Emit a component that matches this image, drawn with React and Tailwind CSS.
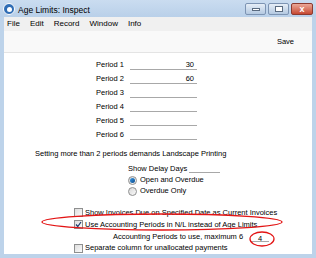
import React from 'react';

const font = { fontFamily: '"Liberation Sans", Arial, sans-serif' };

const periods = [
  { label: 'Period 1', value: '30' },
  { label: 'Period 2', value: '60' },
  { label: 'Period 3', value: '' },
  { label: 'Period 4', value: '' },
  { label: 'Period 5', value: '' },
  { label: 'Period 6', value: '' },
];

const Checkbox = ({ checked }) => (
  <span className="w-[9px] h-[9px] border border-[#8e8f8f] bg-gradient-to-br from-[#dedede] to-[#fafafa] flex items-center justify-center shrink-0">
    {checked && (
      <svg width="7" height="7" viewBox="0 0 7 7">
        <path d="M1 3.5 L2.8 5.5 L6 1" stroke="#1c3c6e" strokeWidth="1.2" fill="none" />
      </svg>
    )}
  </span>
);

const Radio = ({ checked }) => (
  <span className="w-[9px] h-[9px] rounded-full border border-[#8e8f8f] bg-gradient-to-br from-[#d8d8d8] to-[#fafafa] flex items-center justify-center shrink-0">
    {checked && <span className="w-[5px] h-[5px] rounded-full bg-gradient-to-br from-[#3a9ae6] to-[#0a4a8c]" />}
  </span>
);

const App = () => {
  return (
    <div className="relative w-[316px] h-[258px] bg-[#bdd3ea] flex flex-col text-black overflow-hidden" style={font}>
      {/* Title bar */}
      <div className="h-[17px] shrink-0 flex items-start px-[3px] bg-gradient-to-b from-[#cadcf0] to-[#b9d0e9]">
        <span className="mt-[3px] w-[12px] h-[12px] rounded-full bg-[#2f6db5] border border-white flex items-center justify-center">
          <span className="w-[5px] h-[5px] rounded-full bg-white" />
        </span>
        <span className="ml-[3px] mt-[4px] text-[8.5px] leading-[12px]">Age Limits: Inspect</span>
        <div className="ml-auto flex gap-[2px] mt-[3px]">
          <div className="w-[21px] h-[12px] rounded-[2px] border border-[#7d94b3] bg-gradient-to-b from-[#e6eef7] to-[#b4c9e1] flex items-end justify-center pb-[3px]">
            <span className="w-[8px] h-[3px] bg-white border border-[#5a6b80]" />
          </div>
          <div className="w-[21px] h-[12px] rounded-[2px] border border-[#7d94b3] bg-gradient-to-b from-[#e6eef7] to-[#b4c9e1] flex items-center justify-center">
            <span className="w-[8px] h-[6px] border border-[#5a6b80] bg-white" />
          </div>
          <div className="w-[22px] h-[12px] rounded-[2px] border border-[#8c3a30] bg-gradient-to-b from-[#eaa797] to-[#c64832] flex items-center justify-center text-white text-[9px] font-bold leading-none">
            x
          </div>
        </div>
      </div>

      {/* Inner window */}
      <div className="flex-1 min-h-0 mx-[4px] mb-[4px] flex flex-col bg-white">
        {/* Menu */}
        <div className="h-[14px] shrink-0 bg-[#f0f0f0] flex items-center text-[8px] leading-[10px] pl-[3px] gap-[10px]">
          <span>File</span>
          <span>Edit</span>
          <span>Record</span>
          <span>Window</span>
          <span>Info</span>
        </div>
        {/* Toolbar */}
        <div className="h-[22px] shrink-0 bg-[#f9f9f9] border-b border-[#e4e4e4] flex items-center justify-end pr-[18px] text-[7.5px] leading-[10px]">
          Save
        </div>

        {/* Form */}
        <div className="flex-1 min-h-0 flex flex-col text-[7.5px] leading-[10px]">
          <div className="flex flex-col pt-[5px] pl-[92px] shrink-0">
            {periods.map((p) => (
              <div key={p.label} className="h-[14px] shrink-0 flex items-center">
                <span className="w-[34px]">{p.label}</span>
                <span className="w-[67px] h-[10px] border-b border-[#a8a8a8] text-right pr-[3px] leading-[9px]">{p.value}</span>
              </div>
            ))}
          </div>

          <div className="mt-[7px] pl-[31px] h-[10px] shrink-0">Setting more than 2 periods demands Landscape Printing</div>

          <div className="mt-[5px] pl-[124px] flex flex-col gap-[1px] shrink-0">
            <div className="flex items-center h-[10px]">
              <span>Show Delay Days</span>
              <span className="ml-[2px] w-[31px] h-[7px] border-b border-[#a8a8a8]" />
            </div>
            <div className="flex items-center gap-[3px] h-[10px]">
              <Radio checked />
              <span>Open and Overdue</span>
            </div>
            <div className="flex items-center gap-[3px] h-[10px]">
              <Radio />
              <span>Overdue Only</span>
            </div>
          </div>

          <div className="mt-[11px] pl-[70px] flex flex-col shrink-0">
            <div className="flex items-center gap-[2px] h-[11px]">
              <Checkbox />
              <span>Show Invoices Due on Specified Date as Current Invoices</span>
            </div>
            <div className="flex items-center gap-[2px] h-[13px]">
              <Checkbox checked />
              <span>Use Accounting Periods in N/L instead of Age Limits</span>
            </div>
            <div className="flex items-center h-[12px] pl-[39px]">
              <span>Accounting Periods to use, maximum 6</span>
              <span className="ml-[8px] w-[18px] h-[9px] border-b border-[#a8a8a8] text-center leading-[9px] pt-[1px]">4</span>
            </div>
            <div className="flex items-center gap-[2px] h-[10px]">
              <Checkbox />
              <span>Separate column for unallocated payments</span>
            </div>
          </div>
        </div>
      </div>

      {/* red annotations */}
      <svg className="absolute left-0 top-0 pointer-events-none" width="316" height="258" viewBox="0 0 316 258">
        <ellipse cx="162" cy="222" rx="120" ry="8" fill="none" stroke="#e31414" strokeWidth="1.3" />
        <ellipse cx="262" cy="239" rx="12" ry="7" fill="none" stroke="#e31414" strokeWidth="1.3" />
      </svg>
    </div>
  );
};

export default App;
